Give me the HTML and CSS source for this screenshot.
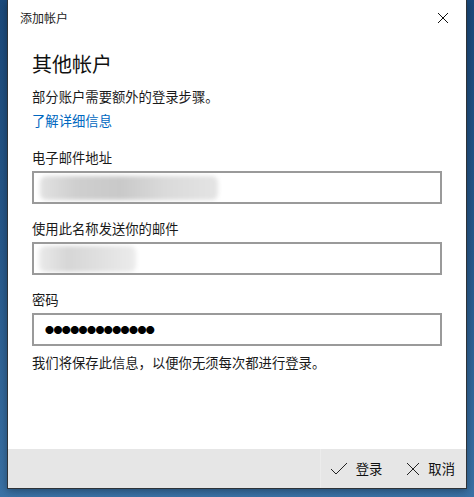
FILE: index.html
```html
<!DOCTYPE html>
<html lang="zh-CN">
<head>
<meta charset="utf-8">
<title>添加帐户</title>
<link rel="stylesheet" href="styles.css">
</head>
<body>
<div class="window">
  <div class="titlebar">
    <span class="title">添加帐户</span>
    <svg class="close" width="12" height="12" viewBox="0 0 12 12"><path d="M1 1L11 11M11 1L1 11" stroke="#111" stroke-width="1" fill="none"/></svg>
  </div>
  <div class="content">
    <h1 class="heading">其他帐户</h1>
    <p class="desc">部分账户需要额外的登录步骤。</p>
    <a class="link">了解详细信息</a>
    <label class="label">电子邮件地址</label>
    <div class="input"><div class="blur blur-a"></div></div>
    <label class="label gap">使用此名称发送你的邮件</label>
    <div class="input"><div class="blur blur-b"></div></div>
    <label class="label gap">密码</label>
    <div class="input"><span class="dots">●●●●●●●●●●●●●</span></div>
    <p class="note">我们将保存此信息，以便你无须每次都进行登录。</p>
  </div>
  <div class="footer">
    <div class="btn first">
      <svg width="18" height="14" viewBox="0 0 18 14"><path d="M1 7L6 12L17 1" stroke="#222" stroke-width="1" fill="none"/></svg>
      <span>登录</span>
    </div>
    <div class="btn">
      <svg width="14" height="14" viewBox="0 0 14 14"><path d="M1 1L13 13M13 1L1 13" stroke="#222" stroke-width="1" fill="none"/></svg>
      <span>取消</span>
    </div>
  </div>
</div>
</body>
</html>
```

FILE: styles.css
```css
html, body {
  margin: 0;
  padding: 0;
}
body {
  width: 474px;
  height: 497px;
  overflow: hidden;
  background: linear-gradient(180deg, #1b4a7c 0%, #27598c 50%, #3a72a6 100%);
  font-family: "Noto Sans CJK SC", "Noto Sans", sans-serif;
  color: #1a1a1a;
}
.window {
  margin-left: 7px;
  width: 458px;
  height: 488px;
  background: #fff;
  border: 1px solid #2e3338;
  border-top: none;
  display: flex;
  flex-direction: column;
  box-shadow: 0 2px 8px rgba(0,0,0,0.35);
}
.titlebar {
  height: 34px;
  display: flex;
  align-items: center;
  justify-content: space-between;
  padding: 0 17px 0 12px;
}
.title {
  font-size: 12px;
  color: #222;
}
.close {
  margin-top: 1px;
}
.content {
  padding: 0 24px;
  display: flex;
  flex-direction: column;
}
.heading {
  margin: 16px 0 0;
  font-size: 20px;
  font-weight: normal;
  line-height: 28px;
  color: #111;
}
.desc {
  margin: 9px 0 0;
  font-size: 13.33px;
  line-height: 20px;
}
.link {
  margin-top: 4px;
  font-size: 13.33px;
  line-height: 20px;
  color: #0067c0;
}
.label {
  margin-top: 17px;
  font-size: 13.33px;
  line-height: 20px;
}
.label.gap {
  margin-top: 15px;
}
.input {
  margin-top: 3px;
  height: 29px;
  border: 2px solid #9a9a9a;
  position: relative;
  overflow: hidden;
  display: flex;
  align-items: center;
}
.blur {
  position: absolute;
  background: #d4d4d4;
  filter: blur(2px);
  border-radius: 6px;
}
.blur-a {
  left: 6px;
  top: 3px;
  width: 178px;
  height: 24px;
  background: linear-gradient(90deg, #e2e2e2 0%, #cfcfcf 20%, #c9c9c9 45%, #dadada 70%, #e4e4e4 100%);
}
.blur-b {
  left: 5px;
  top: 2px;
  width: 97px;
  height: 26px;
  background: linear-gradient(90deg, #eaeaea 0%, #d6d6d6 30%, #dfdfdf 60%, #ececec 100%);
}
.dots {
  margin-left: 11px;
  font-size: 9px;
  letter-spacing: -0.6px;
  color: #000;
}
.note {
  margin: 7px 0 0;
  font-size: 13.33px;
  line-height: 20px;
}
.footer {
  margin-top: auto;
  height: 39px;
  background: #e6e6e6;
  display: flex;
  justify-content: flex-end;
}
.btn {
  display: flex;
  align-items: center;
  gap: 8px;
  padding: 0 11px 0 0;
  font-size: 13.33px;
  color: #111;
}
.btn.first {
  padding-left: 9px;
  padding-right: 24px;
  border-left: 1px solid #ececec;
}
```
